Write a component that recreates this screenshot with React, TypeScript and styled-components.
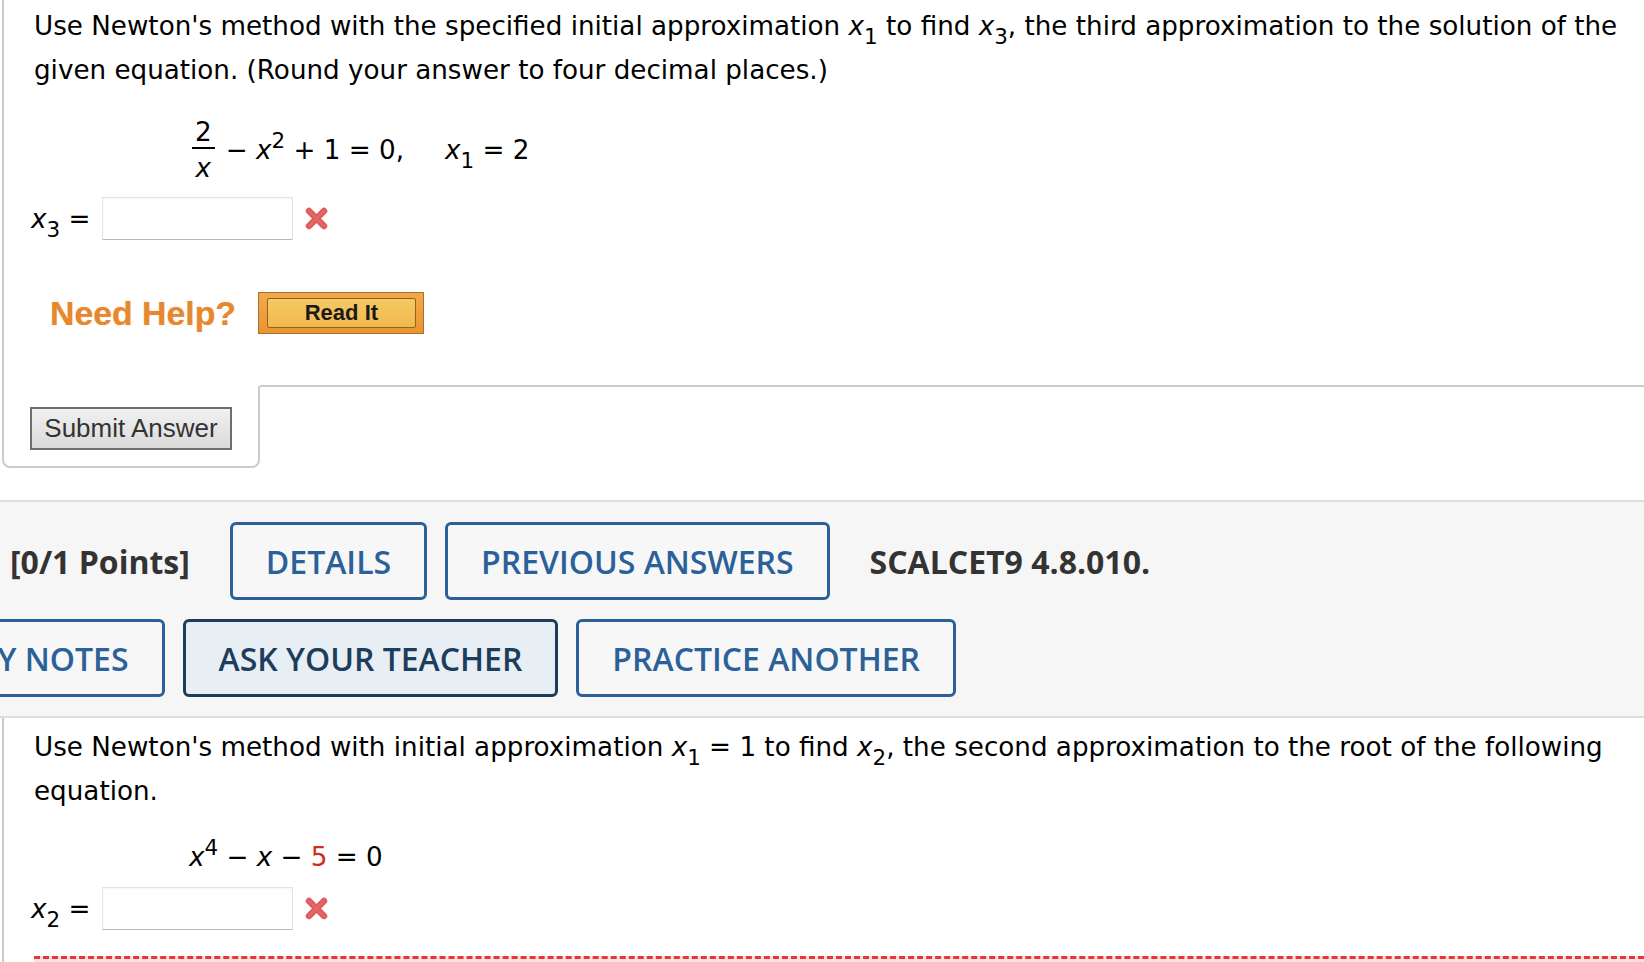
import React from 'react';
import styled, {createGlobalStyle} from 'styled-components';

const GlobalStyle = createGlobalStyle`
  html, body {
    margin: 0;
    padding: 0;
    background: #fff;
  }
  body {
    width: 1644px;
    height: 962px;
    overflow: hidden;
    font-family: "DejaVu Sans", Verdana, sans-serif;
    color: #000;
  }
`

const Page = styled.div`
  display: flex;
  flex-direction: column;
`

const QuestionCard = styled.div<{ $top: number; $bottom: number }>`
  margin-left: 2px;
  border-left: 2px solid #ccc;
  padding: ${p => p.$top}px 0 ${p => p.$bottom}px 30px;
`

const Prompt = styled.p`
  margin: 0;
  font-size: 26.2px;
  line-height: 44px;
`

const Var = styled.i`
  font-style: italic;
`

const Sub = styled.sub`
  font-size: 0.82em;
  vertical-align: -0.4em;
  line-height: 0;
`

const Sup = styled.sup`
  font-size: 0.82em;
  vertical-align: 0.5em;
  line-height: 0;
`

const Red = styled.span`
  color: #d52b1e;
`

const EquationRow = styled.div<{ $indent: number; $top: number }>`
  display: flex;
  align-items: center;
  padding-left: ${p => p.$indent}px;
  margin-top: ${p => p.$top}px;
  font-size: 26.2px;
  line-height: 28px;
  white-space: pre;
`

const Fraction = styled.span`
  display: inline-flex;
  flex-direction: column;
  align-items: center;
  margin-right: 11px;
`

const Numerator = styled.span`
  padding: 0 3px 1px;
  border-bottom: 2px solid #000;
`

const Denominator = styled.span`
  padding-top: 5px;
`

const Gap = styled.span<{ $w: number }>`
  display: inline-block;
  width: ${p => p.$w}px;
`

const AnswerRow = styled.div<{ $top: number }>`
  display: flex;
  align-items: center;
  margin-top: ${p => p.$top}px;
  margin-left: -3px;
`

const AnswerLabel = styled.span`
  font-size: 26.2px;
  line-height: 28px;
  margin-right: 12px;
`

const AnswerInput = styled.input`
  box-sizing: border-box;
  width: 191px;
  height: 43px;
  border: 1px solid #e2e2e2;
  border-bottom-color: #b9b9b9;
  border-radius: 1px;
  background: #fff;
  box-shadow: inset 0 1px 2px rgba(0, 0, 0, 0.04);
  margin-right: 10px;
`

const WrongMark = () => (
    <svg width="27" height="25" viewBox="0 0 27 25">
        <path d="M6 5 L21 20 M21 5 L6 20" stroke="#e15b5b" strokeWidth="6.5" strokeLinecap="round"/>
        <path d="M6 5 L21 20 M21 5 L6 20" stroke="#e87373" strokeWidth="2" strokeLinecap="round" opacity="0.6"/>
    </svg>
)

const HelpRow = styled.div`
  display: flex;
  align-items: center;
  margin-top: 52px;
  padding-left: 16px;
  gap: 22px;
`

const NeedHelp = styled.span`
  font-family: "Liberation Sans", Arial, sans-serif;
  font-weight: bold;
  font-size: 33.8px;
  color: #e6882f;
  text-shadow: 0 0 1px rgba(230, 136, 47, 0.6);
`

const ReadItButton = styled.button`
  box-sizing: border-box;
  display: flex;
  width: 166px;
  height: 42px;
  padding: 5px 7px 5px 8px;
  border: 1px solid #a8702e;
  background: linear-gradient(#f3a848, #ec9431);
  cursor: pointer;
`

const ReadItFace = styled.span`
  flex: 1;
  display: flex;
  align-items: center;
  justify-content: center;
  border: 1px solid #8c6424;
  border-radius: 2px;
  background: linear-gradient(#f6c964, #f1b94d);
  font-family: "Liberation Sans", Arial, sans-serif;
  font-weight: bold;
  font-size: 22px;
  color: #1a1a1a;
`

const SubmitBar = styled.div`
  display: flex;
`

const SubmitTab = styled.div`
  box-sizing: border-box;
  width: 258px;
  margin-left: 2px;
  padding: 21px 0 16px 26px;
  border: 2px solid #ccc;
  border-top: none;
  border-radius: 0 0 8px 8px;
`

const SubmitFiller = styled.div`
  flex: 1;
  margin-top: -1px;
  border-top: 2px solid #ccc;
`

const SubmitButton = styled.button`
  box-sizing: border-box;
  width: 202px;
  height: 43px;
  padding: 0;
  border: 2px solid #6e6e6e;
  background: linear-gradient(#f1f1f1, #dadada);
  font-family: "Liberation Sans", Arial, sans-serif;
  font-size: 26px;
  color: #333;
  cursor: pointer;
`

const HeaderBand = styled.div`
  margin-top: 32px;
  padding: 20px 0 19px;
  border-top: 2px solid #dedede;
  border-bottom: 2px solid #dedede;
  background: #f6f6f6;
  display: flex;
  flex-direction: column;
  gap: 19px;
  font-family: "Open Sans", sans-serif;
  font-size: 32px;
`

const HeaderRow = styled.div<{ $shift: number }>`
  display: flex;
  align-items: center;
  gap: 18px;
  margin-left: ${p => p.$shift}px;
`

const PointsLabel = styled.span`
  font-weight: 700;
  color: #333;
  margin-right: 22px;
`

const CourseCode = styled.span`
  font-weight: 700;
  color: #333;
  margin-left: 22px;
`

const ActionButton = styled.button<{ $active?: boolean }>`
  box-sizing: border-box;
  height: 78px;
  padding: 0 33px;
  border: 3px solid ${p => (p.$active ? '#1c3d5c' : '#2b6199')};
  border-radius: 6px;
  background: ${p => (p.$active ? '#e8eff4' : '#f7f7f7')};
  color: ${p => (p.$active ? '#1c3d5c' : '#2b6199')};
  font-family: "Open Sans", sans-serif;
  font-weight: 600;
  font-size: 32px;
  white-space: nowrap;
  cursor: pointer;
`

const FeedbackBox = styled.div`
  margin-top: 26px;
  height: 40px;
  border-top: 3px dashed #ec3434;
  background: #fbe2e2;
`

export default function App() {
    return (
        <Page>
            <GlobalStyle/>
            <QuestionCard $top={4} $bottom={52}>
                <Prompt>
                    Use Newton's method with the specified initial approximation <Var>x</Var><Sub>1</Sub> to
                    find <Var>x</Var><Sub>3</Sub>, the third approximation to the solution of the
                    <br/>
                    given equation. (Round your answer to four decimal places.)
                </Prompt>
                <EquationRow $indent={158} $top={26}>
                    <Fraction>
                        <Numerator>2</Numerator>
                        <Denominator><Var>x</Var></Denominator>
                    </Fraction>
                    <span>− <Var>x</Var><Sup>2</Sup> + 1 = 0,</span>
                    <Gap $w={41}/>
                    <span><Var>x</Var><Sub>1</Sub> = 2</span>
                </EquationRow>
                <AnswerRow $top={15}>
                    <AnswerLabel><Var>x</Var><Sub>3</Sub> =</AnswerLabel>
                    <AnswerInput type="text" aria-label="x3"/>
                    <WrongMark/>
                </AnswerRow>
                <HelpRow>
                    <NeedHelp>Need Help?</NeedHelp>
                    <ReadItButton><ReadItFace>Read It</ReadItFace></ReadItButton>
                </HelpRow>
            </QuestionCard>
            <SubmitBar>
                <SubmitTab>
                    <SubmitButton>Submit Answer</SubmitButton>
                </SubmitTab>
                <SubmitFiller/>
            </SubmitBar>

            <HeaderBand>
                <HeaderRow $shift={10}>
                    <PointsLabel>[0/1 Points]</PointsLabel>
                    <ActionButton>DETAILS</ActionButton>
                    <ActionButton>PREVIOUS ANSWERS</ActionButton>
                    <CourseCode>SCALCET9 4.8.010.</CourseCode>
                </HeaderRow>
                <HeaderRow $shift={-68}>
                    <ActionButton>MY NOTES</ActionButton>
                    <ActionButton $active>ASK YOUR TEACHER</ActionButton>
                    <ActionButton>PRACTICE ANOTHER</ActionButton>
                </HeaderRow>
            </HeaderBand>

            <QuestionCard $top={7} $bottom={0}>
                <Prompt>
                    Use Newton's method with initial approximation <Var>x</Var><Sub>1</Sub> = 1 to
                    find <Var>x</Var><Sub>2</Sub>, the second approximation to the root of the following
                    <br/>
                    equation.
                </Prompt>
                <EquationRow $indent={155} $top={30}>
                    <span><Var>x</Var><Sup>4</Sup> − <Var>x</Var> − <Red>5</Red> = 0</span>
                </EquationRow>
                <AnswerRow $top={16}>
                    <AnswerLabel><Var>x</Var><Sub>2</Sub> =</AnswerLabel>
                    <AnswerInput type="text" aria-label="x2"/>
                    <WrongMark/>
                </AnswerRow>
                <FeedbackBox/>
            </QuestionCard>
        </Page>
    );
}
